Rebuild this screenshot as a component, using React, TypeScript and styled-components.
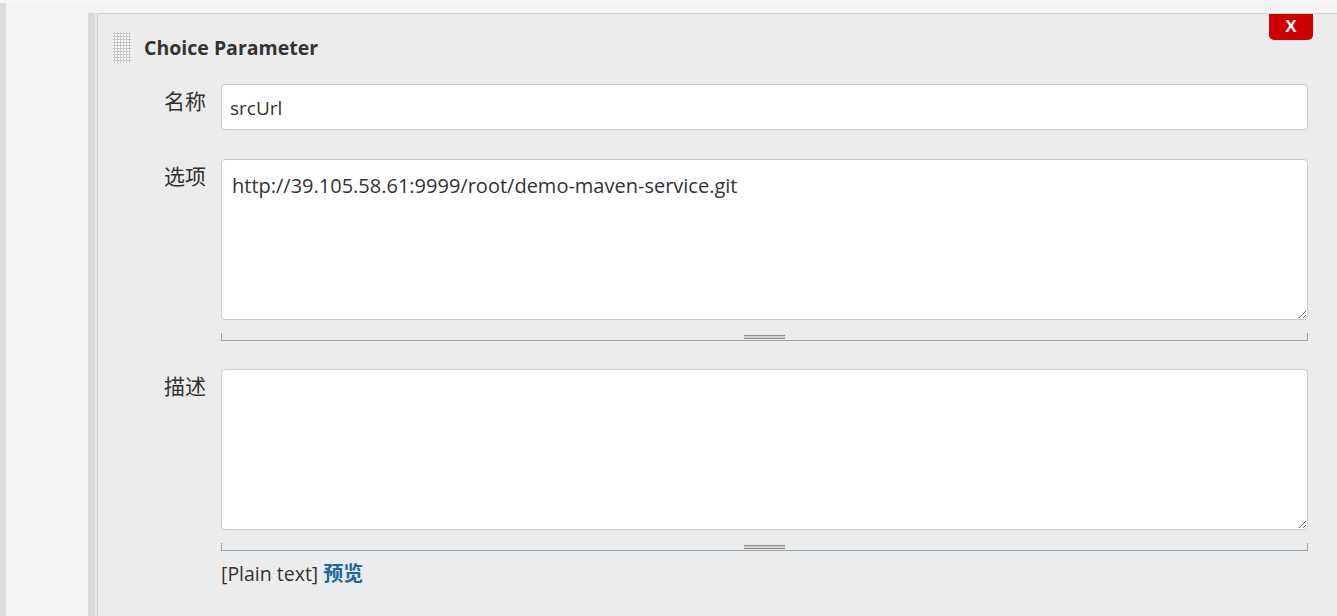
import React from "react";
import styled, { createGlobalStyle } from "styled-components";

const GlobalStyle = createGlobalStyle`
  html, body { margin: 0; padding: 0; }
  body {
    background: #f3f3f3;
    font-family: "Open Sans", "Noto Sans CJK SC", sans-serif;
    color: #333;
  }
`;

const Page = styled.div`
  border-top: 3px solid #f8f8f8;
  display: flex;
  box-sizing: border-box;
  height: 616px;
  overflow: hidden;
`;

const LeftEdge = styled.div`
  width: 6px;
  flex: none;
  background: #dcdcdc;
`;

const Gutter = styled.div`
  width: 82px;
  flex: none;
`;

const Section = styled.div`
  flex: 1;
  margin-top: 10px;
  border-left: 7px solid #d9d9d9;
  padding-left: 2px;
  background: #e9e9e9;
  display: flex;
`;

const Panel = styled.div`
  position: relative;
  flex: 1;
  background: #ececec;
  border-left: 1px solid #d4d4d4;
  border-top: 1px solid #d4d4d4;
  padding: 18px 29px 0 0;
`;

const Header = styled.div`
  display: flex;
  align-items: center;
  gap: 13px;
  padding-left: 15px;
  height: 31px;
`;

const Handle = styled.div`
  width: 18px;
  height: 31px;
  background-color: #fafafa;
  background-image: radial-gradient(circle, #c4c4c4 1px, transparent 1.4px);
  background-size: 3px 3px;
  background-position: 0 0;
`;

const Title = styled.h2`
  margin: 0;
  font-size: 19.5px;
  font-weight: 700;
  color: #333;
`;

const DeleteButton = styled.button`
  position: absolute;
  top: 0;
  right: 24px;
  width: 44px;
  height: 26px;
  border: none;
  border-radius: 0 0 5px 5px;
  background: #cc0000;
  color: #fff;
  font-family: "Liberation Sans", Arial, sans-serif;
  font-weight: 700;
  font-size: 17px;
  line-height: 26px;
  padding: 0;
  cursor: pointer;
`;

const Row = styled.div<{ $top: number }>`
  display: flex;
  margin-top: ${(p) => p.$top}px;
`;

const Label = styled.div`
  width: 123px;
  flex: none;
  box-sizing: border-box;
  padding-right: 15px;
  padding-top: 5px;
  text-align: right;
  font-size: 21px;
  line-height: 24px;
  color: #333;
`;

const Field = styled.div`
  flex: 1;
  display: flex;
  flex-direction: column;
`;

const TextInput = styled.input`
  box-sizing: border-box;
  width: 100%;
  height: 46px;
  border: 1px solid #cccccc;
  border-radius: 4px;
  background: #fff;
  padding: 1px 8px 0;
  font-family: inherit;
  font-size: 19px;
  color: #333;
  outline: none;
`;

const TextArea = styled.textarea`
  box-sizing: border-box;
  width: 100%;
  height: 161px;
  border: 1px solid #cccccc;
  border-radius: 4px;
  background: #fff;
  padding: 12px 10px;
  font-family: inherit;
  font-size: 20px;
  line-height: 28px;
  color: #333;
  outline: none;
  resize: vertical;
  display: block;
`;

const ResizeBar = styled.div`
  margin-top: 13px;
  height: 8px;
  box-sizing: border-box;
  background: #e8ecee;
  border: 1px solid #9aa5ab;
  border-top: none;
  display: flex;
  justify-content: center;
  align-items: flex-start;
  padding-top: 2px;
`;

const Grip = styled.div`
  width: 41px;
  height: 4px;
  border-top: 1px solid #8a8f8a;
  border-bottom: 1px solid #8a8f8a;
  box-sizing: border-box;
  background: #d0d0d0;
`;

const Hint = styled.div`
  margin-top: 11px;
  font-size: 19.5px;
  line-height: 24px;
  color: #333;
`;

const Preview = styled.a`
  color: #1a6aa0;
  font-weight: 700;
  font-size: 20px;
  text-decoration: none;
  cursor: pointer;
`;

export default function App() {
  return (
    <>
      <GlobalStyle />
      <Page>
        <LeftEdge />
        <Gutter />
        <Section>
          <Panel>
            <DeleteButton>X</DeleteButton>
            <Header>
              <Handle />
              <Title>Choice Parameter</Title>
            </Header>
            <Row $top={21}>
              <Label>名称</Label>
              <Field>
                <TextInput defaultValue="srcUrl" />
              </Field>
            </Row>
            <Row $top={29}>
              <Label>选项</Label>
              <Field>
                <TextArea defaultValue="http://39.105.58.61:9999/root/demo-maven-service.git" />
                <ResizeBar>
                  <Grip />
                </ResizeBar>
              </Field>
            </Row>
            <Row $top={28}>
              <Label>描述</Label>
              <Field>
                <TextArea defaultValue="" />
                <ResizeBar>
                  <Grip />
                </ResizeBar>
                <Hint>
                  [Plain text] <Preview>预览</Preview>
                </Hint>
              </Field>
            </Row>
          </Panel>
        </Section>
      </Page>
    </>
  );
}
